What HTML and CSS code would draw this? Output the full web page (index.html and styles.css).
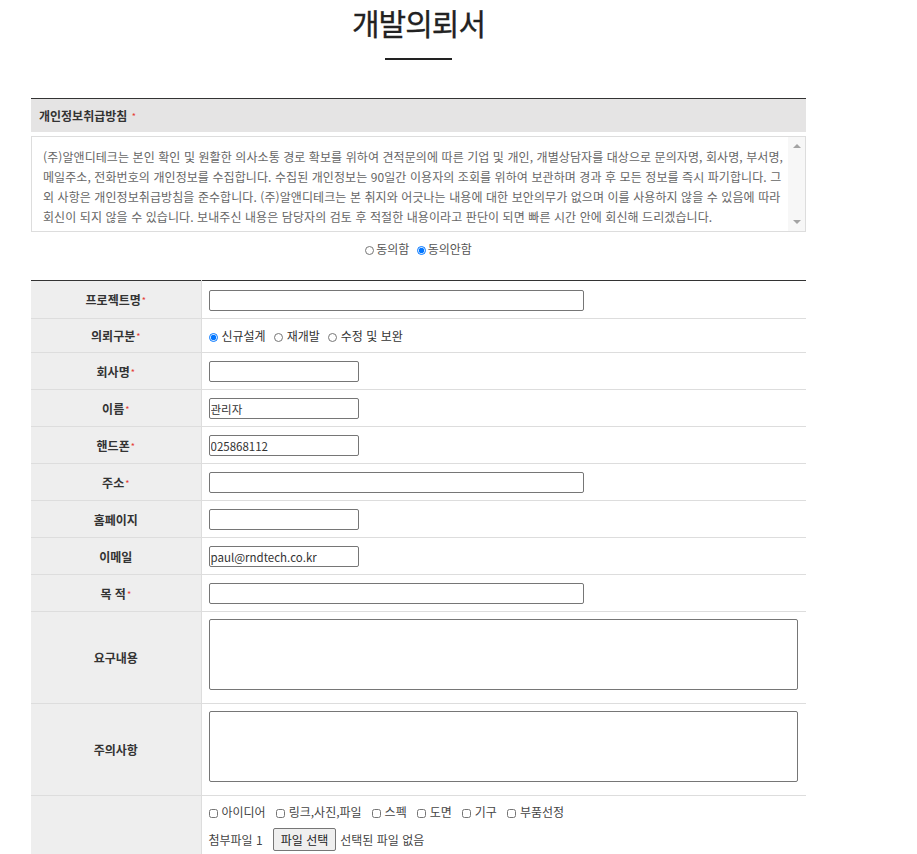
FILE: index.html
```html
<!DOCTYPE html>
<html lang="ko">
<head>
    <meta charset="UTF-8">
    <meta name="viewport" content="width=device-width, initial-scale=1.0">
    <title>개발의뢰서</title>
    <link rel="stylesheet" href="styles.css">
</head>
<body>
    <div class="wrap">
        <!-- 제목 -->
        <h1 class="title">개발의뢰서</h1>
        <div class="title-line"></div>

        <!-- 개인정보 동의 -->
        <div class="privacy">
            <div class="privacy-head">개인정보취급방침 <span class="req">*</span></div>
            <div class="privacy-box">
                <div class="privacy-text">
                    (주)알앤디테크는 본인 확인 및 원활한 의사소통 경로 확보를 위하여 견적문의에 따른 기업 및 개인, 개별상담자를 대상으로 문의자명, 회사명, 부서명,<br>
                    메일주소, 전화번호의 개인정보를 수집합니다. 수집된 개인정보는 90일간 이용자의 조회를 위하여 보관하며 경과 후 모든 정보를 즉시 파기합니다. 그<br>
                    외 사항은 개인정보취급방침을 준수합니다. (주)알앤디테크는 본 취지와 어긋나는 내용에 대한 보안의무가 없으며 이를 사용하지 않을 수 있음에 따라<br>
                    회신이 되지 않을 수 있습니다. 보내주신 내용은 담당자의 검토 후 적절한 내용이라고 판단이 되면 빠른 시간 안에 회신해 드리겠습니다.
                </div>
                <div class="scroll">
                    <span class="arrow-up"></span>
                    <span class="arrow-down"></span>
                </div>
            </div>
            <div class="agree">
                <label><input type="radio" name="agree">동의함</label>
                <label><input type="radio" name="agree" checked>동의안함</label>
            </div>
        </div>

        <!-- 의뢰 양식 -->
        <table class="form-table">
            <colgroup>
                <col class="col-label">
                <col>
            </colgroup>
            <tr class="first-row">
                <th>프로젝트명<span class="req">*</span></th>
                <td><input type="text" class="inp inp-lg"></td>
            </tr>
            <tr>
                <th>의뢰구분<span class="req">*</span></th>
                <td>
                    <div class="opts">
                        <label><input type="radio" name="kind" checked>신규설계</label>
                        <label><input type="radio" name="kind">재개발</label>
                        <label><input type="radio" name="kind">수정 및 보완</label>
                    </div>
                </td>
            </tr>
            <tr>
                <th>회사명<span class="req">*</span></th>
                <td><input type="text" class="inp inp-sm"></td>
            </tr>
            <tr>
                <th>이름<span class="req">*</span></th>
                <td><input type="text" class="inp inp-sm" value="관리자"></td>
            </tr>
            <tr>
                <th>핸드폰<span class="req">*</span></th>
                <td><input type="text" class="inp inp-sm" value="025868112"></td>
            </tr>
            <tr>
                <th>주소<span class="req">*</span></th>
                <td><input type="text" class="inp inp-lg"></td>
            </tr>
            <tr>
                <th>홈페이지</th>
                <td><input type="text" class="inp inp-sm"></td>
            </tr>
            <tr>
                <th>이메일</th>
                <td><input type="text" class="inp inp-sm" value="paul@rndtech.co.kr"></td>
            </tr>
            <tr>
                <th>목 적<span class="req">*</span></th>
                <td><input type="text" class="inp inp-lg"></td>
            </tr>
            <tr>
                <th>요구내용</th>
                <td class="area-cell"><textarea class="area"></textarea></td>
            </tr>
            <tr>
                <th>주의사항</th>
                <td class="area-cell"><textarea class="area"></textarea></td>
            </tr>
            <tr>
                <th></th>
                <td class="file-cell">
                    <div class="checks">
                        <label><input type="checkbox">아이디어</label>
                        <label><input type="checkbox">링크,사진,파일</label>
                        <label><input type="checkbox">스펙</label>
                        <label><input type="checkbox">도면</label>
                        <label><input type="checkbox">기구</label>
                        <label><input type="checkbox">부품선정</label>
                    </div>
                    <div class="file-row">
                        <span class="file-label">첨부파일 1</span>
                        <button type="button" class="file-btn">파일 선택</button>
                        <span>선택된 파일 없음</span>
                    </div>
                </td>
            </tr>
        </table>
    </div>
</body>
</html>
```

FILE: styles.css
```css
body {
    margin: 0;
    font-family: "Noto Sans CJK KR", "Noto Sans", sans-serif;
    color: #333;
    background: #fff;
}
.wrap {
    width: 775px;
    margin-left: 31px;
}
.title {
    margin: 0;
    padding-top: 2px;
    font-size: 30px;
    font-weight: 400;
    letter-spacing: -1px;
    line-height: 40px;
    text-align: center;
    color: #222;
    -webkit-text-stroke: 0.3px #222;
}
.title-line {
    width: 67px;
    height: 2px;
    background: #222;
    margin: 16px auto 0;
}
.req {
    color: #e53935;
    font-size: 9px;
    font-weight: normal;
    vertical-align: 1px;
    margin-left: 1px;
}
.privacy {
    margin-top: 38px;
}
.privacy-head {
    border-top: 1px solid #333;
    background: #e5e4e4;
    height: 33px;
    line-height: 33px;
    padding-left: 8px;
    font-size: 12px;
    font-weight: bold;
}
.privacy-box {
    display: flex;
    height: 94px;
    margin-top: 4px;
    border: 1px solid #ddd;
}
.privacy-text {
    flex: 1;
    padding: 10px 0 0 11px;
    font-size: 12px;
    letter-spacing: 0.08px;
    line-height: 20px;
    color: #666;
    white-space: nowrap;
    overflow: hidden;
}
.scroll {
    width: 17px;
    background: #f7f7f7;
    display: flex;
    flex-direction: column;
    justify-content: space-between;
    align-items: center;
    padding: 7px 0;
}
.arrow-up,
.arrow-down {
    width: 0;
    height: 0;
    border-left: 4px solid transparent;
    border-right: 4px solid transparent;
}
.arrow-up {
    border-bottom: 4px solid #a3a3a3;
}
.arrow-down {
    border-top: 4px solid #a3a3a3;
}
.agree {
    text-align: center;
    font-size: 12px;
    color: #555;
    line-height: 18px;
    margin: 8px 0 22px;
}
.agree label {
    margin: 0 2px;
}
input[type="radio"],
input[type="checkbox"] {
    width: 9px;
    height: 9px;
    margin: 0 2px 0 0;
    vertical-align: -1px;
}
.form-table {
    width: 100%;
    table-layout: fixed;
    border-collapse: collapse;
    border-top: 1px solid #333;
    font-size: 12px;
}
.col-label {
    width: 170px;
}
.form-table th {
    background: #eee;
    border-bottom: 1px solid #ddd;
    border-right: 1px solid #ddd;
    font-weight: bold;
    text-align: center;
    padding: 0;
    color: #333;
}
.form-table td {
    border-bottom: 1px solid #ddd;
    padding: 8px 8px 7px 7px;
}
.form-table .first-row td {
    padding-top: 9px;
}
.inp {
    display: block;
    box-sizing: border-box;
    height: 21px;
    border: 1px solid #767676;
    border-radius: 2px;
    padding: 0 1px;
    font-family: inherit;
    font-size: 11.5px;
    color: #333;
}
.inp-lg {
    width: 375px;
}
.inp-sm {
    width: 150px;
}
.opts {
    display: flex;
    align-items: center;
    gap: 8px;
    line-height: 18px;
}
.opts input {
    margin-right: 4px;
}
.form-table td.area-cell {
    padding: 7px 8px 13px 7px;
}
.area {
    display: block;
    box-sizing: border-box;
    width: 589px;
    height: 71px;
    border: 1px solid #767676;
    border-radius: 2px;
    resize: none;
}
.checks {
    display: flex;
    gap: 10px;
    line-height: 16px;
    color: #444;
}
.checks input {
    margin-right: 4px;
}
.file-row {
    display: flex;
    align-items: center;
    gap: 4px;
    margin-top: 8px;
    color: #444;
}
.file-label {
    margin-right: 6px;
}
.file-btn {
    height: 23px;
    padding: 0 7px;
    border: 1px solid #767676;
    border-radius: 2px;
    background: #efefef;
    font-family: inherit;
    font-size: 12px;
    color: #222;
}
```
